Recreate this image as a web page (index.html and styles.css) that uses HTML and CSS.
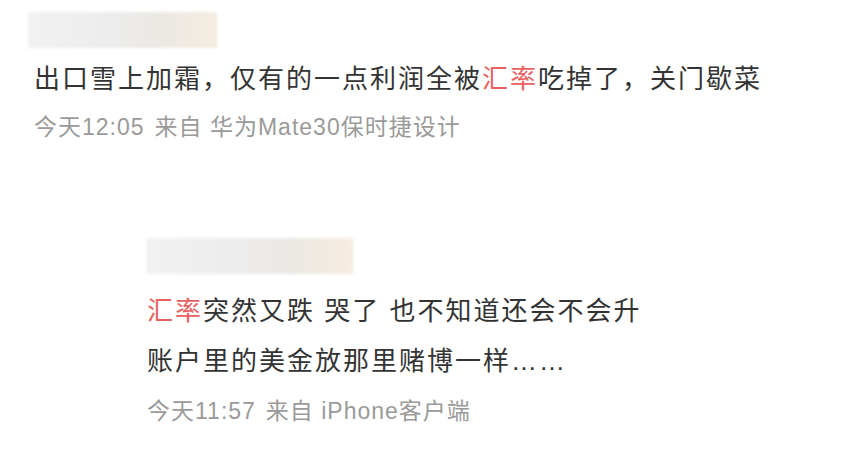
FILE: index.html
```html
<!DOCTYPE html>
<html lang="zh-CN">
<head>
<meta charset="utf-8">
<link rel="stylesheet" href="styles.css">
</head>
<body>
<div class="comment">
  <div class="name-blur name-blur-1"></div>
  <p class="text">出口雪上加霜，仅有的一点利润全被<span class="hl">汇率</span>吃掉了，关门歇菜</p>
  <p class="meta"><span class="time">今天12:05</span><span class="src">来自 华为Mate30保时捷设计</span></p>
</div>
<div class="reply">
  <div class="name-blur name-blur-2"></div>
  <p class="text"><span class="hl">汇率</span>突然又跌 哭了 也不知道还会不会升<br>账户里的美金放那里赌博一样……</p>
  <p class="meta"><span class="time">今天11:57</span><span class="src">来自 iPhone客户端</span></p>
</div>
</body>
</html>
```
FILE: styles.css
```css
html, body {
  margin: 0;
  padding: 0;
  background: #ffffff;
}
body {
  width: 856px;
  height: 450px;
  overflow: hidden;
  font-family: "Liberation Sans", "Noto Sans CJK SC", sans-serif;
}
p {
  margin: 0;
}
.comment {
  padding-left: 34px;
  padding-top: 12px;
}
.reply {
  padding-left: 147px;
  padding-top: 91px;
}
.name-blur {
  height: 36px;
  background: linear-gradient(90deg, #f1f1f1 0%, #ececec 45%, #ebe8e3 70%, #f5ecdf 100%);
  filter: blur(1.5px);
}
.name-blur-1 {
  width: 189px;
  margin-left: -6px;
}
.name-blur-2 {
  width: 207px;
  margin-left: -1px;
}
.text {
  font-size: 26px;
  letter-spacing: 2px;
  line-height: 50px;
  color: #333333;
}
.comment .text {
  margin-top: 6px;
}
.reply .text {
  margin-top: 12px;
}
.hl {
  color: #e8615f;
}
.meta {
  font-size: 23px;
  letter-spacing: 1px;
  line-height: 40px;
  color: #9a9a9a;
  margin-top: 3px;
}
.reply .meta {
  margin-top: 5px;
}
.time {
  margin-right: 10px;
}
```
